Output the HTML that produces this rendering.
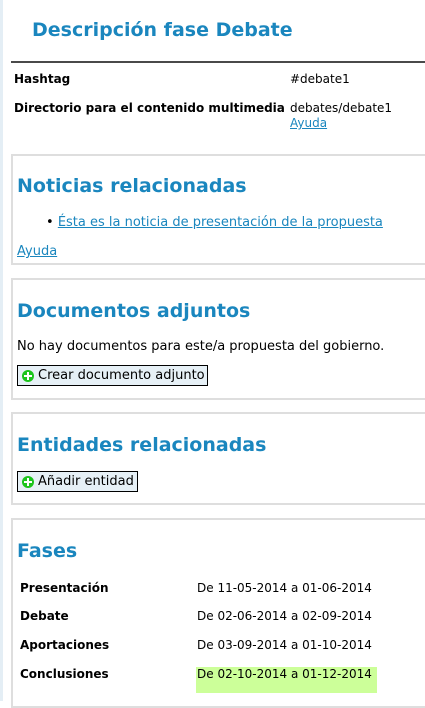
<!DOCTYPE html>
<html><head><meta charset="utf-8"><style>
body{margin:0;width:425px;height:701px;background:#fff;font-family:"DejaVu Sans","Liberation Sans",sans-serif;color:#000;position:relative;overflow:hidden}
.a{position:absolute;white-space:nowrap;line-height:1}
.strip{position:absolute;left:0;top:0;width:3px;height:701px;background:#e4eef5}
h1,h2{margin:0;position:absolute;color:#1a86be;font-weight:bold;white-space:nowrap;line-height:1}
h1{font-size:19px}
h2{font-size:19px}
.b{font-weight:bold;font-size:12px}
.t{font-size:13px}
.s{font-size:12px}
a{color:#1a86be;text-decoration:underline}
.box{position:absolute;left:11px;width:420px;border:2px solid #dedede;box-sizing:border-box}
.btn{position:absolute;left:17px;height:21px;border:1px solid #000;background:#e6f0f6;box-sizing:border-box;font-size:13px;line-height:19px;padding-left:20px;white-space:nowrap}
.btn i{position:absolute;left:4px;top:4px;width:12px;height:12px;border-radius:50%;background:#1bc41b}
.btn i:before{content:"";position:absolute;left:5px;top:2px;width:2px;height:8px;background:#fff}
.btn i:after{content:"";position:absolute;left:2px;top:5px;width:8px;height:2px;background:#fff}
</style></head><body>
<div class="strip"></div>
<h1 style="left:32px;top:21px">Descripción fase Debate</h1>
<div style="position:absolute;left:11px;top:61px;width:414px;height:2px;background:#4a4a4a"></div>
<div class="a b" style="left:14px;top:73px">Hashtag</div>
<div class="a s" style="left:290px;top:73px">#debate1</div>
<div class="a b" style="left:14px;top:102px">Directorio para el contenido multimedia</div>
<div class="a s" style="left:290px;top:102px">debates/debate1</div>
<div class="a s" style="left:290px;top:117px"><a>Ayuda</a></div>

<div class="box" style="top:154px;height:111px"></div>
<h2 style="left:17px;top:177px">Noticias relacionadas</h2>
<div class="a t" style="left:46px;top:216px">•&nbsp;<a>Ésta es la noticia de presentación de la propuesta</a></div>
<div class="a t" style="left:17px;top:245px"><a>Ayuda</a></div>

<div class="box" style="top:278px;height:122px"></div>
<h2 style="left:17px;top:302px">Documentos adjuntos</h2>
<div class="a t" style="left:17px;top:340px">No hay documentos para este/a propuesta del gobierno.</div>
<div class="btn" style="top:365px;width:191px"><i></i>Crear documento adjunto</div>

<div class="box" style="top:412px;height:93px"></div>
<h2 style="left:17px;top:436px">Entidades relacionadas</h2>
<div class="btn" style="top:471px;width:121px"><i></i>Añadir entidad</div>

<div class="box" style="top:518px;height:190px"></div>
<h2 style="left:17px;top:542px">Fases</h2>
<div style="position:absolute;left:196px;top:667px;width:181px;height:26px;background:#ccff99"></div>
<div class="a b" style="left:20px;top:582px">Presentación</div>
<div class="a s" style="left:197px;top:582px">De 11-05-2014 a 01-06-2014</div>
<div class="a b" style="left:20px;top:610px">Debate</div>
<div class="a s" style="left:197px;top:610px">De 02-06-2014 a 02-09-2014</div>
<div class="a b" style="left:20px;top:639px">Aportaciones</div>
<div class="a s" style="left:197px;top:639px">De 03-09-2014 a 01-10-2014</div>
<div class="a b" style="left:20px;top:668px">Conclusiones</div>
<div class="a s" style="left:197px;top:668px">De 02-10-2014 a 01-12-2014</div>
</body></html>
